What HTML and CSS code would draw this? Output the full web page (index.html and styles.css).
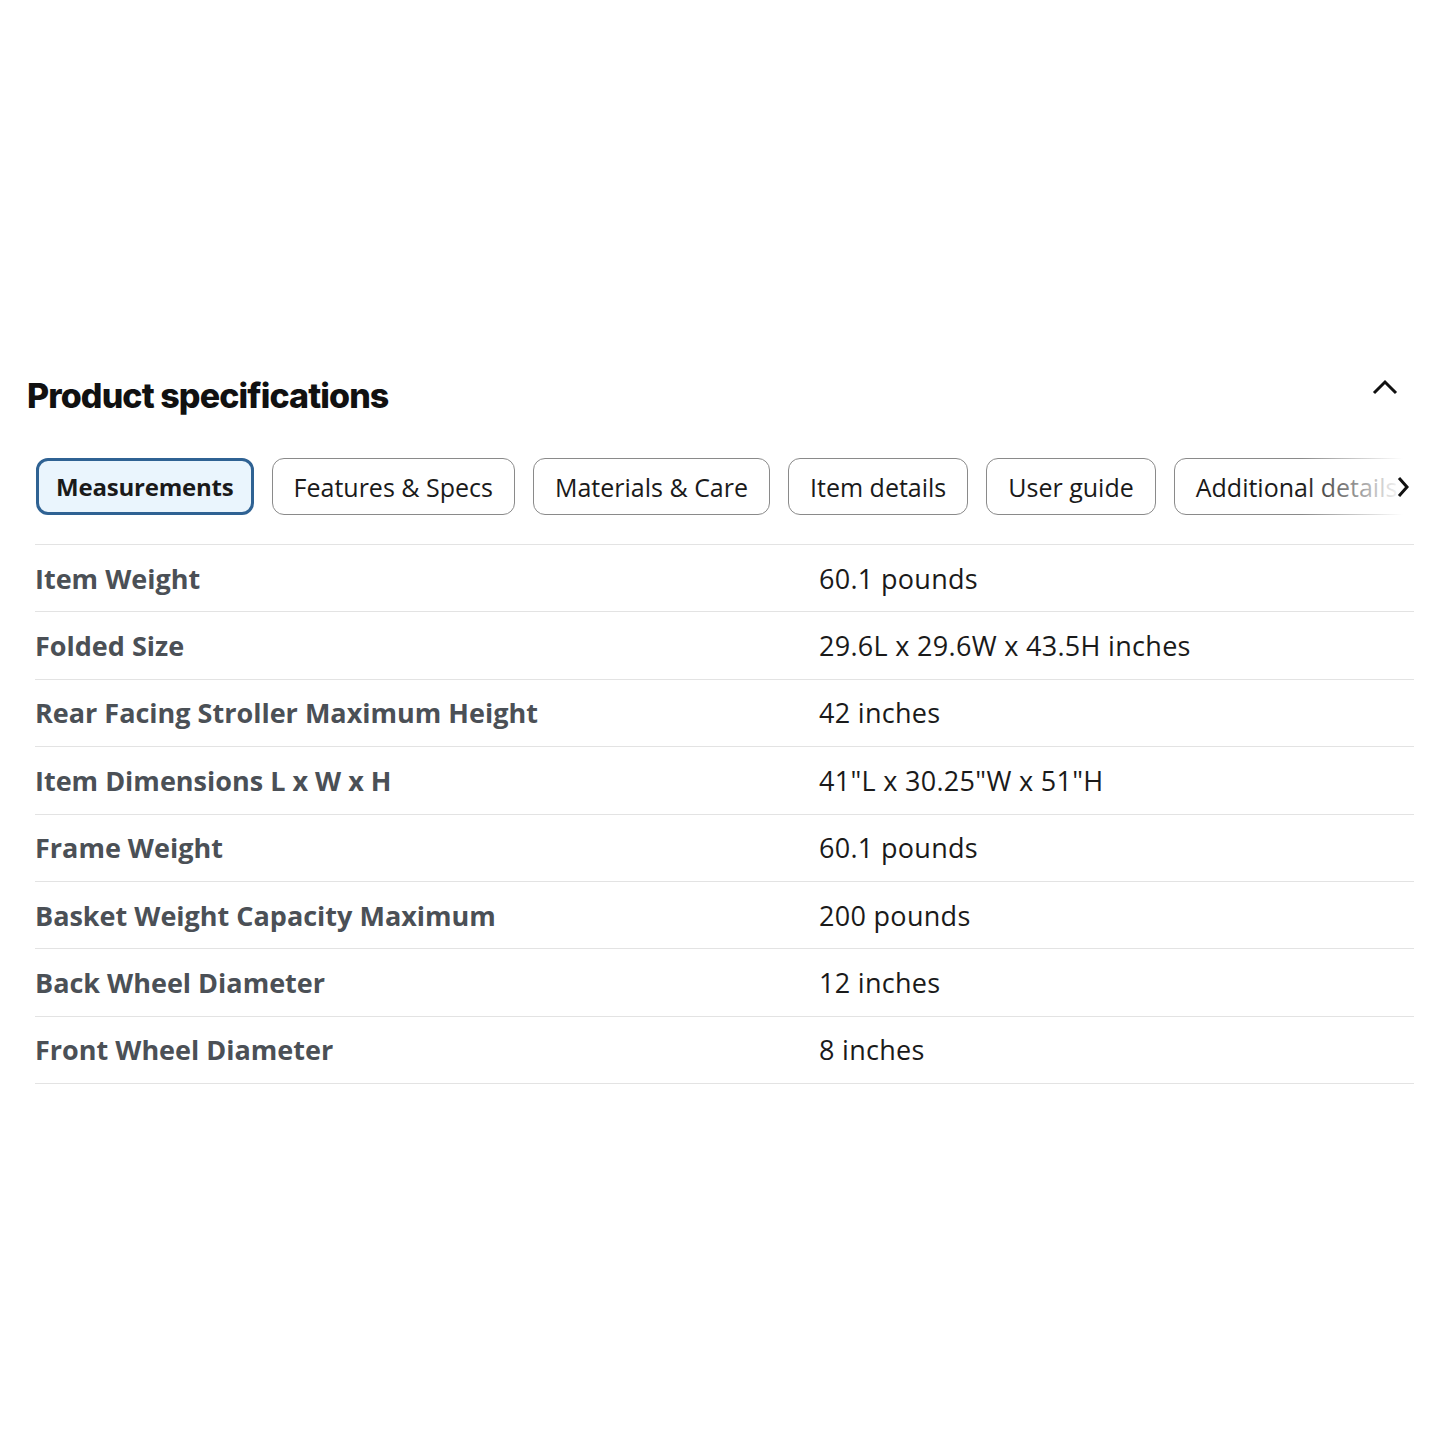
FILE: index.html
```html
<!DOCTYPE html>
<html lang="en">
<head>
    <meta charset="UTF-8">
    <meta name="viewport" content="width=device-width, initial-scale=1.0">
    <title>Product specifications</title>
<link rel="stylesheet" href="styles.css">
</head>
<body>
    <section class="specs">
        <div class="specs_head">
            <h2 class="specs_title">Product specifications</h2>
            <svg class="caret" width="28" height="18" viewBox="0 0 28 18"><path d="M3 15 L14 4 L25 15" fill="none" stroke="#111" stroke-width="3"/></svg>
        </div>

        <div class="tabs">
            <div class="tab active">Measurements</div>
            <div class="tab">Features &amp; Specs</div>
            <div class="tab">Materials &amp; Care</div>
            <div class="tab">Item details</div>
            <div class="tab">User guide</div>
            <div class="tab last">Additional details</div>
            <div class="tabs_fade">
                <svg width="16" height="24" viewBox="0 0 16 24"><path d="M4 3 L12 12 L4 21" fill="none" stroke="#111" stroke-width="3"/></svg>
            </div>
        </div>

        <div class="spec_table">
            <div class="spec_row"><div class="spec_label">Item Weight</div><div class="spec_value">60.1 pounds</div></div>
            <div class="spec_row"><div class="spec_label">Folded Size</div><div class="spec_value">29.6L x 29.6W x 43.5H inches</div></div>
            <div class="spec_row"><div class="spec_label">Rear Facing Stroller Maximum Height</div><div class="spec_value">42 inches</div></div>
            <div class="spec_row"><div class="spec_label">Item Dimensions L x W x H</div><div class="spec_value">41"L x 30.25"W x 51"H</div></div>
            <div class="spec_row"><div class="spec_label">Frame Weight</div><div class="spec_value">60.1 pounds</div></div>
            <div class="spec_row"><div class="spec_label">Basket Weight Capacity Maximum</div><div class="spec_value">200 pounds</div></div>
            <div class="spec_row"><div class="spec_label">Back Wheel Diameter</div><div class="spec_value">12 inches</div></div>
            <div class="spec_row"><div class="spec_label">Front Wheel Diameter</div><div class="spec_value">8 inches</div></div>
        </div>
    </section>
</body>
</html>
```

FILE: styles.css
```css
body{
    margin:0;
    background:#fff;
    font-family:"Open Sans","Liberation Sans",sans-serif;
    color:#1a1a1a;
}

.specs{
    padding:368px 26px 0 27px;
}

.specs_head{
    display:flex;
    justify-content:space-between;
    align-items:flex-start;
}

.specs_title{
    margin:0;
    font-family:Inter,sans-serif;
    font-weight:800;
    font-size:34px;
    letter-spacing:-0.9px;
    line-height:56px;
    color:#111;
}

.caret{
    margin:10px 15px 0 0;
}

.tabs{
    display:flex;
    gap:18px;
    margin:32px 0 0 9px;
    position:relative;
    overflow:hidden;
    padding:2px 0;
}

.tab{
    flex:none;
    height:55px;
    padding:0 21px;
    border:1px solid #8a8a8a;
    border-radius:12px;
    display:flex;
    align-items:center;
    font-size:25px;
    white-space:nowrap;
}

.tab.active{
    border:3px solid #2f6293;
    background:#eaf5fd;
    font-weight:700;
    font-size:24px;
    letter-spacing:-0.2px;
    padding:0 17px;
    height:51px;
}

.tabs_fade{
    position:absolute;
    right:0;
    top:0;
    bottom:0;
    width:110px;
    background:linear-gradient(to right,rgba(255,255,255,0),#fff 90%);
    display:flex;
    align-items:center;
    justify-content:flex-end;
    padding-right:3px;
}

.spec_table{
    margin:27px 0 0 8px;
    border-top:1px solid #e3e3e3;
}

.spec_row{
    display:flex;
    height:66.4px;
    align-items:center;
    border-bottom:1px solid #e3e3e3;
    font-size:27px;
}

.spec_label{
    width:784px;
    font-weight:700;
    color:#4b5056;
}

.spec_value{
    color:#1a1a1a;
    letter-spacing:0.3px;
}
```
